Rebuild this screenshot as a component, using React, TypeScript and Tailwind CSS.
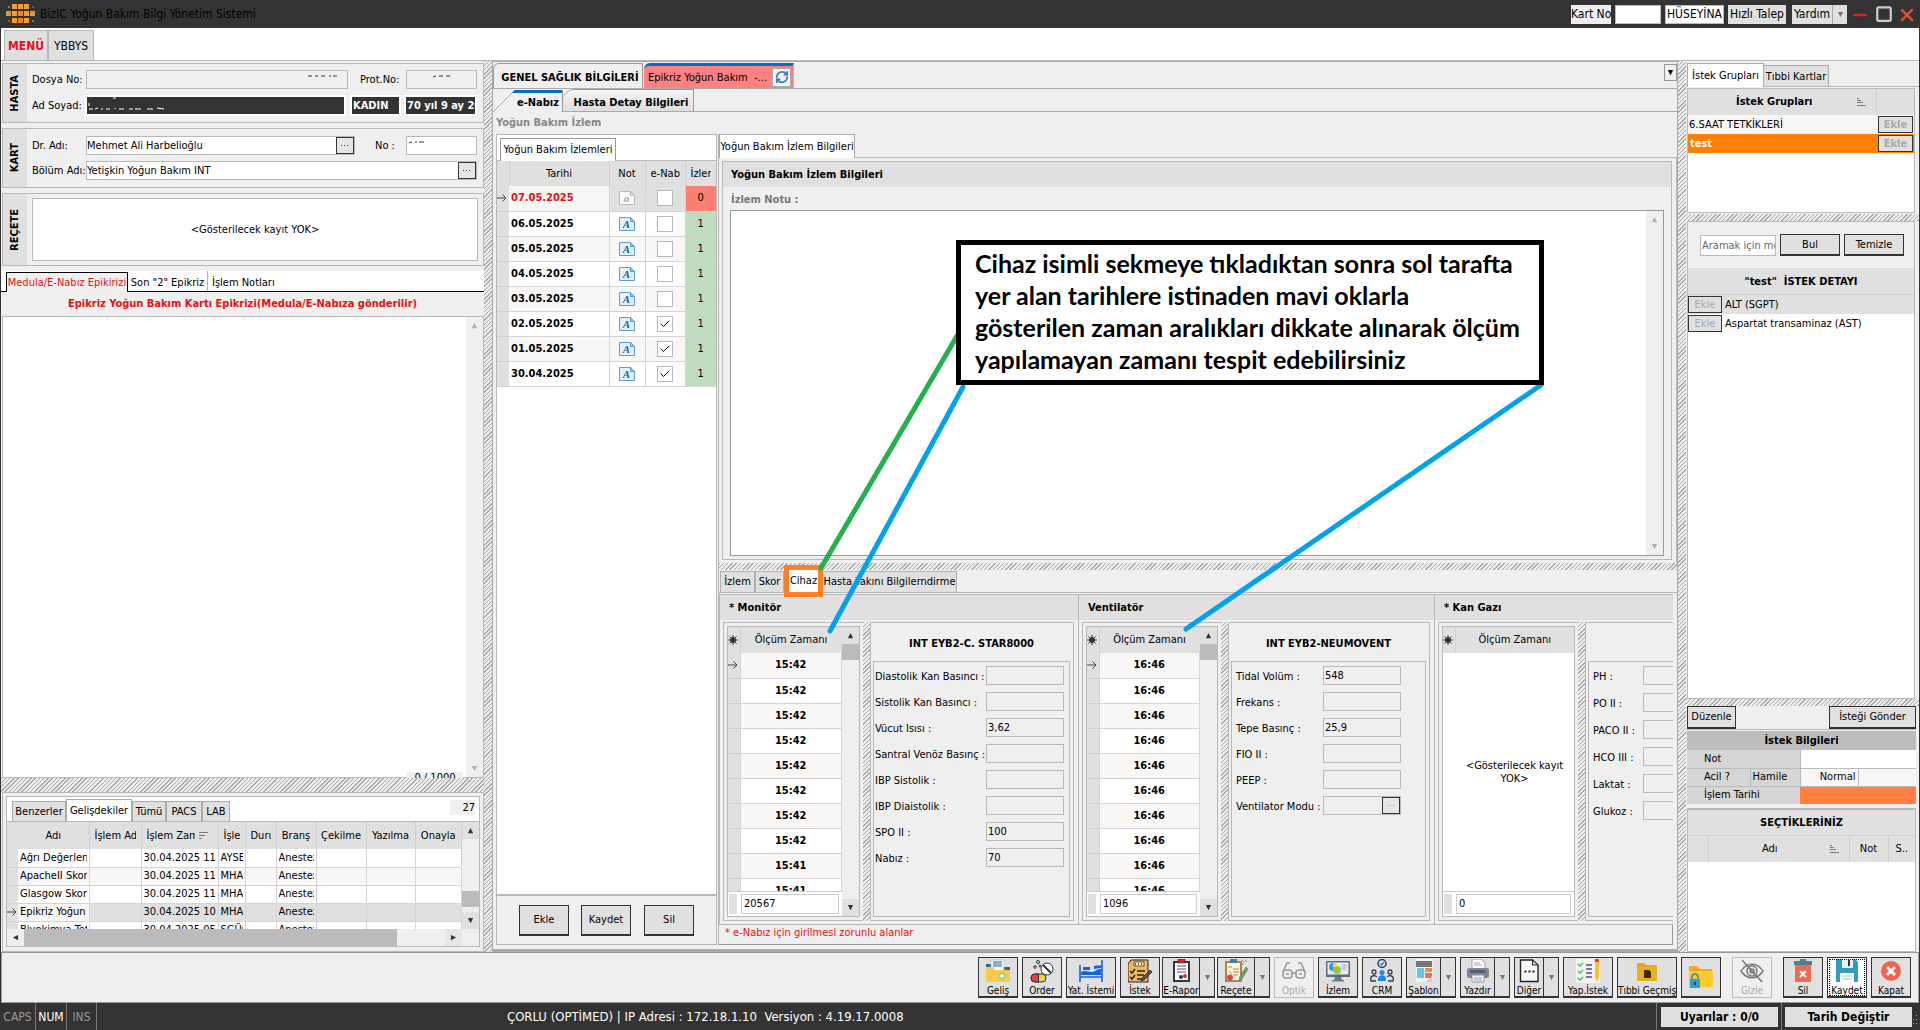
import type { ReactNode } from "react";
import clsx from "clsx";
import { Check, Minus, RefreshCw, Square, X } from "lucide-react";

const HATCH = "bg-[repeating-linear-gradient(135deg,#a9a9a9_0_1px,#ededed_1px_3px)]";

type Dir = "up" | "down" | "left" | "right";

function Arrow({ dir, className = "text-[#333]" }: { dir: Dir; className?: string }) {
  const d = {
    up: "M4 1 7 7H1z",
    down: "M4 7 1 1h6z",
    left: "M1 4 7 1v6z",
    right: "M7 4 1 1v6z",
  }[dir];
  return (
    <svg viewBox="0 0 8 8" className={clsx("size-[7px]", className)}>
      <path d={d} fill="currentColor" />
    </svg>
  );
}

function VScroll({ thumb, muted }: { thumb?: string; muted?: boolean }) {
  const color = muted ? "text-[#b0b0b0]" : "text-[#333]";
  const cap = clsx("flex h-[17px] shrink-0 items-center justify-center", !muted && "bg-[#e0e0e0]");
  return (
    <div className="flex w-[17px] shrink-0 flex-col bg-[#efefef]">
      <div className={cap}>
        <Arrow dir="up" className={color} />
      </div>
      <div className="min-h-0 flex-1 overflow-hidden">
        {thumb && <div className={clsx("bg-[#bbb]", thumb)} />}
      </div>
      <div className={cap}>
        <Arrow dir="down" className={color} />
      </div>
    </div>
  );
}

function RowPointer() {
  return (
    <svg viewBox="0 0 10 8" className="h-2 w-[10px]" fill="none" stroke="#444" strokeWidth="1">
      <path d="M0 4h9M5.500 .5 9 4 5.500 7.500" />
    </svg>
  );
}

function StarMark() {
  return (
    <svg viewBox="0 0 10 10" className="size-[10px]" stroke="#333" strokeWidth="1">
      <circle cx="5" cy="5" r="2.500" fill="#333" />
      <path d="M5 0v10M0 5h10M1.500 1.500l7 7M8.500 1.500l-7 7" />
    </svg>
  );
}

function SortMark({ desc }: { desc?: boolean }) {
  return (
    <svg viewBox="0 0 9 8" className="h-2 w-[9px] shrink-0" stroke="#777" strokeWidth="1">
      {desc ? <path d="M0 .5h9M0 3.500h6M0 6.500h3" /> : <path d="M0 .5h2M0 2.500h4M0 4.500h6M0 7.500h9" />}
    </svg>
  );
}

/* ---------- title bar ---------- */

function Logo() {
  const cells: [number, number, string][] = [
    [6, 0, "#f0a030"], [12, 0, "#f0a030"], [18, 0, "#f0a030"],
    [0, 7, "#d99a35"], [6, 7, "#f0a030"], [12, 7, "#ef7f2a"], [18, 7, "#f0a030"], [24, 7, "#d99a35"],
    [6, 14, "#f0a030"], [12, 14, "#ef7f2a"], [18, 14, "#f0a030"],
  ];
  return (
    <svg viewBox="0 0 30 20" className="h-5 w-[30px]">
      <rect x="2" y="2" width="2" height="2" fill="#8a7a60" />
      <rect x="26" y="16" width="2" height="2" fill="#8a7a60" />
      <rect x="26" y="2" width="2" height="2" fill="#8a5a30" />
      <rect x="2" y="16" width="2" height="2" fill="#8a5a30" />
      {cells.map(([x, y, c]) => (
        <rect key={`${x}-${y}`} x={x} y={y} width="5" height="5" fill={c} />
      ))}
    </svg>
  );
}

function TitleBar() {
  return (
    <header className="flex h-7 shrink-0 items-center bg-[#333] pr-[3px] pl-[6px] text-xs text-black">
      <Logo />
      <h1 className="ml-1 whitespace-nowrap">BizIC Yoğun Bakım Bilgi Yönetim Sistemi</h1>
      <div className="ml-auto flex h-[19px] items-stretch">
        <label htmlFor="kartno" className="w-10 overflow-hidden whitespace-nowrap bg-[#efefef] leading-[19px]">Kart No</label>
        <input id="kartno" className="ml-1 w-[46px] border border-[#bbb] bg-white" />
        <input aria-label="Kullanıcı" defaultValue="HÜSEYİNA" className="ml-1 w-[59px] border border-[#bbb] bg-white pl-px" />
        <button className="ml-1 w-[58px] overflow-hidden whitespace-nowrap bg-[#e0e0e0]">Hızlı Talep</button>
        <button className="ml-[6px] w-10 overflow-hidden whitespace-nowrap bg-[#e0e0e0]">Yardım</button>
        <button aria-label="Yardım menüsü" className="flex w-[15px] items-center justify-center border-l border-[#aaa] bg-[#e0e0e0]">
          <Arrow dir="down" className="text-[#777]" />
        </button>
        <button aria-label="Küçült" className="ml-[3px] text-[#e02020]"><Minus className="size-5" strokeWidth={3} /></button>
        <button aria-label="Büyüt" className="ml-[5px] text-[#ccc]"><Square className="size-[18px]" strokeWidth={3} /></button>
        <button aria-label="Kapat" className="ml-1 text-[#d9502f]"><X className="size-5" strokeWidth={3} /></button>
      </div>
    </header>
  );
}

function MenuBar() {
  const tab = "h-[30px] self-end border border-b-0 border-[#b8b8b8] bg-[#e0e0e0] pt-px text-xs";
  return (
    <nav className="flex h-[33px] shrink-0 border-b border-[#b8b8b8] bg-white pl-[3px]">
      <button className={clsx(tab, "w-11 font-bold text-[#e81010]")}>MENÜ</button>
      <button className={clsx(tab, "w-[46px]")}>YBBYS</button>
    </nav>
  );
}

/* ---------- left column ---------- */

function Panel({ title, className, children }: { title: string; className: string; children: ReactNode }) {
  return (
    <section className={clsx("ml-px flex shrink-0 border border-[#b8b8b8]", className)}>
      <h2 className="flex w-6 shrink-0 items-center justify-center bg-[#e0e0e0] font-bold">
        <span className="rotate-180 [writing-mode:vertical-rl]">{title}</span>
      </h2>
      <div className="flex min-w-0 flex-1 flex-col justify-center gap-[6px] pr-[6px] pl-[5px]">{children}</div>
    </section>
  );
}

function Lookup({ id, value, disabled, className }: { id: string; value?: string; disabled?: boolean; className?: string }) {
  return (
    <div className={clsx("flex h-[19px] border border-[#b8b8b8]", disabled ? "bg-[#eee]" : "bg-white", className)}>
      <input id={id} defaultValue={value} disabled={disabled} className="min-w-0 flex-1 bg-transparent" />
      <button aria-label="Seç" className="flex w-[18px] items-center justify-center border border-[#333] bg-[#e6e6e6]">
        <svg viewBox="0 0 8 2" className="h-[2px] w-2" fill={disabled ? "#aaa" : "#333"}>
          <rect width="1" height="1" x="0" />
          <rect width="1" height="1" x="3" />
          <rect width="1" height="1" x="6" />
        </svg>
      </button>
    </div>
  );
}

function PatientPanels() {
  const field = "h-[19px] border border-[#b8b8b8] px-px";
  const dark = "h-[21px] border-2 border-white bg-[#333] pl-px font-bold text-white";
  return (
    <>
      <Panel title="HASTA" className="h-[60px]">
        <div className="flex items-center">
          <label htmlFor="dosya" className="w-[54px] whitespace-nowrap">Dosya No:</label>
          <div className={clsx(field, "flex flex-1 justify-end")}>
            <input id="dosya" readOnly className="min-w-0 flex-1" />
            <svg viewBox="0 0 30 4" className="mt-1 mr-2 h-1 w-[30px]" stroke="#333">
              <path d="M0 1h4M7 1h3M13 1h4M21 1h2M25 1h4" />
            </svg>
          </div>
          <label htmlFor="prot" className="ml-3 w-[46px] whitespace-nowrap">Prot.No:</label>
          <div className={clsx(field, "flex w-[71px]")}>
            <input id="prot" readOnly className="min-w-0 flex-1" />
            <svg viewBox="0 0 18 4" className="mt-1 mr-6 h-1 w-[18px]" stroke="#333">
              <path d="M0 2l3-1M6 1h4M13 1h4" />
            </svg>
          </div>
        </div>
        <div className="flex items-center">
          <label htmlFor="adsoyad" className="w-[53px] whitespace-nowrap">Ad Soyad:</label>
          <div className={clsx(dark, "flex flex-1")}>
            <svg viewBox="0 0 80 14" className="h-[14px] w-20 shrink-0" stroke="#fff" fill="none">
              <path d="M1 6v3M1 12h4M7 12l3-1M13 12h2M18 12h4M25 1h3M27 11v1M31 12h5M41 12h4M47 12h6M59 12h6M69 11l7 1" />
            </svg>
            <input id="adsoyad" readOnly className="min-w-0 flex-1" />
          </div>
          <input aria-label="Cinsiyet" readOnly value="KADIN" className={clsx(dark, "ml-1 w-[51px]")} />
          <input aria-label="Yaş" readOnly value="70 yıl 9 ay 20 gün" className={clsx(dark, "ml-[3px] w-[73px]")} />
        </div>
      </Panel>

      <Panel title="KART" className="h-[60px]">
        <div className="flex items-center">
          <label htmlFor="dr" className="w-[54px] whitespace-nowrap">Dr. Adı:</label>
          <Lookup id="dr" value="Mehmet Ali Harbelioğlu" className="flex-1" />
          <label htmlFor="kno" className="ml-5 w-[31px] whitespace-nowrap">No :</label>
          <div className={clsx(field, "flex w-[71px] bg-white")}>
            <svg viewBox="0 0 16 4" className="mt-1 ml-px h-1 w-4" stroke="#333">
              <path d="M0 2l3-1M6 1h2M10 1h5" />
            </svg>
            <input id="kno" className="min-w-0 flex-1" />
          </div>
        </div>
        <div className="flex items-center">
          <label htmlFor="bolum" className="w-[54px] whitespace-nowrap">Bölüm Adı:</label>
          <Lookup id="bolum" value="Yetişkin Yoğun Bakım INT" className="flex-1" />
        </div>
      </Panel>

      <Panel title="REÇETE" className="h-[73px]">
        <div className="-mr-px flex h-[63px] items-center justify-center border border-[#b8b8b8] bg-white">
          &lt;Gösterilecek kayıt YOK&gt;
        </div>
      </Panel>
    </>
  );
}

function Epikriz() {
  return (
    <section className="flex min-h-0 flex-1 flex-col">
      <div className="flex h-[21px] shrink-0 items-end border-b border-black bg-white pl-[5px]">
        <button className="-mb-px h-5 w-[122px] border border-b-0 border-black bg-[#f0f0f0] pt-px whitespace-nowrap text-[#e81010]">Medula/E-Nabız Epikirizi</button>
        <button className="h-5 w-20 border-r border-[#b0b0b0] pt-[3px] whitespace-nowrap">Son "2" Epikriz</button>
        <button className="h-5 px-1 pt-[3px] whitespace-nowrap">İşlem Notları</button>
      </div>
      <h2 className="flex h-6 shrink-0 items-center justify-center font-bold text-[#e81010]">
        Epikriz Yoğun Bakım Kartı Epikrizi(Medula/E-Nabıza gönderilir)
      </h2>
      <div className="relative ml-px flex min-h-0 flex-1 border border-[#b8b8b8] bg-white">
        <textarea aria-label="Epikriz" className="min-w-0 flex-1 resize-none bg-white" />
        <VScroll muted />
        <div className="absolute right-5 -bottom-px h-[6px] w-14 overflow-hidden bg-[#efefef] text-center leading-3">0 / 1000</div>
      </div>
    </section>
  );
}

const VISITS = [
  ["Ağrı Değerlendirme", "30.04.2025 11:40", "AYSEL", "Anestezi"],
  ["ApacheII Skoru", "30.04.2025 11:30", "MHARB", "Anestezi"],
  ["Glasgow Skoru", "30.04.2025 11:20", "MHARB", "Anestezi"],
  ["Epikriz Yoğun Bakım", "30.04.2025 10:55", "MHARB", "Anestezi"],
  ["Biyokimya Tetkik", "30.04.2025 05:10", "SGÜÇL", "Anestezi"],
];

function Clip({ children }: { children: ReactNode }) {
  return <span className="block overflow-hidden whitespace-nowrap">{children}</span>;
}

function VisitList() {
  const tab = "h-5 border border-b-0 border-[#aaa] bg-[#e0e0e0]";
  const th = "border-r border-[#cfcfcf] pr-[5px] pl-[5px] font-normal";
  const td = "h-[18px] border-r border-b border-[#d4d4d4] px-[2px]";
  return (
    <section className="ml-px flex h-[160px] shrink-0 flex-col border border-[#b8b8b8] px-[3px] pt-[3px] pb-1">
      <div className="flex min-h-0 flex-1 flex-col border border-[#b8b8b8] bg-white">
        <div className="flex h-[25px] shrink-0 items-end border-b border-[#b8b8b8] pl-[5px]">
          <button className={clsx(tab, "w-[54px]")}>Benzerler</button>
          <button className="h-[22px] w-[66px] border border-b-0 border-[#aaa] bg-white">Gelişdekiler</button>
          <button className={clsx(tab, "w-[34px]")}>Tümü</button>
          <button className={clsx(tab, "w-9")}>PACS</button>
          <button className={clsx(tab, "w-7")}>LAB</button>
          <output className="mr-1 mb-[6px] ml-auto h-[15px] w-[25px] bg-[#efefef] text-right leading-[15px]">27</output>
        </div>
        <div className="flex min-h-0 flex-1">
          <div className="min-w-0 flex-1 overflow-hidden">
            <table className="w-full table-fixed border-collapse">
              <colgroup>
                <col className="w-[11px]" />
                <col className="w-[71px]" />
                <col className="w-[52px]" />
                <col className="w-[77px]" />
                <col className="w-[27px]" />
                <col className="w-[31px]" />
                <col className="w-10" />
                <col className="w-[50px]" />
                <col className="w-[49px]" />
                <col />
              </colgroup>
              <thead>
                <tr className="h-[27px] bg-[#e0e0e0]">
                  <th />
                  <th className={th}>Adı</th>
                  <th className={clsx(th, "text-left")}><Clip>İşlem Adı</Clip></th>
                  <th className={th}>
                    <span className="flex items-center gap-1">
                      <span className="w-12 overflow-hidden whitespace-nowrap">İşlem Zamanı</span>
                      <SortMark desc />
                    </span>
                  </th>
                  <th className={clsx(th, "text-left")}><Clip>İşlem</Clip></th>
                  <th className={clsx(th, "text-left")}><Clip>Durum</Clip></th>
                  <th className="border-r border-[#cfcfcf] font-normal">Branş</th>
                  <th className="border-r border-[#cfcfcf] font-normal">Çekilme</th>
                  <th className="border-r border-[#cfcfcf] font-normal">Yazılma</th>
                  <th className="border-r border-[#cfcfcf] font-normal">Onayla</th>
                </tr>
              </thead>
              <tbody>
                {VISITS.map(([adi, zaman, kisi, brans], i) => (
                  <tr key={adi} className={i === 3 ? "bg-[#e0e0e0]" : i % 2 ? "bg-[#f8f7f6]" : "bg-white"}>
                    <td className="border-b border-[#d4d4d4] bg-[#e0e0e0]">{i === 3 && <RowPointer />}</td>
                    <td className={clsx(td, i === 3 && "bg-[#f8f7f6]")}><Clip>{adi}</Clip></td>
                    <td className={td} />
                    <td className={td}><Clip>{zaman}</Clip></td>
                    <td className={td}><Clip>{kisi}</Clip></td>
                    <td className={td} />
                    <td className={td}><Clip>{brans}</Clip></td>
                    <td className={td} />
                    <td className={td} />
                    <td className={td} />
                  </tr>
                ))}
              </tbody>
            </table>
          </div>
          <VScroll thumb="mt-[52px] h-4" />
        </div>
        <div className="flex h-[17px] shrink-0 items-stretch bg-[#efefef]">
          <div className="flex w-[17px] items-center justify-center"><Arrow dir="left" /></div>
          <div className="w-[373px] bg-[#bbb]" />
          <div className="ml-auto flex w-[17px] items-center justify-center bg-[#e6e6e6]"><Arrow dir="right" /></div>
          <div className="w-[17px]" />
        </div>
      </div>
    </section>
  );
}

/* ---------- center: follow-up list and note ---------- */

const DAYS = [
  { date: "07.05.2025", sent: false, count: 0 },
  { date: "06.05.2025", sent: false, count: 1 },
  { date: "05.05.2025", sent: false, count: 1 },
  { date: "04.05.2025", sent: false, count: 1 },
  { date: "03.05.2025", sent: false, count: 1 },
  { date: "02.05.2025", sent: true, count: 1 },
  { date: "01.05.2025", sent: true, count: 1 },
  { date: "30.04.2025", sent: true, count: 1 },
];

function NoteIcon({ empty }: { empty?: boolean }) {
  return (
    <svg viewBox="0 0 16 14" className="inline-block h-[14px] w-4 align-middle">
      <path d="M.5.5h11l4 4v9H.5z" fill={empty ? "#f8f8f8" : "#e3f1fd"} stroke={empty ? "#bbb" : "#5a9bd8"} />
      <path d="M11.500.5v4h4z" fill={empty ? "#ddd" : "#8cc4f2"} stroke={empty ? "#bbb" : "#5a9bd8"} />
      <text x="7.500" y="11" textAnchor="middle" fontSize="11" fontWeight="bold" fontStyle="italic" fontFamily="Liberation Serif, serif" fill={empty ? "#aaa" : "#2560a8"}>
        {empty ? "a" : "A"}
      </text>
    </svg>
  );
}

function DayList() {
  const cell = "border-r border-b border-[#d4d4d4]";
  const btn = "h-[31px] w-[50px] border border-b-2 border-[#333] bg-[#e0e0e0]";
  return (
    <section className="flex w-[221px] shrink-0 flex-col border border-[#b8b8b8] bg-white">
      <div className="flex h-[26px] shrink-0 items-end border-b border-[#b8b8b8] pl-[3px]">
        <button className="-mb-px h-[23px] w-[116px] border border-b-0 border-[#999] bg-white whitespace-nowrap">Yoğun Bakım İzlemleri</button>
      </div>
      <table className="w-full table-fixed border-collapse">
        <colgroup>
          <col className="w-3" />
          <col className="w-[100px]" />
          <col className="w-9" />
          <col className="w-10" />
          <col />
        </colgroup>
        <thead>
          <tr className="h-[25px] bg-[#e0e0e0] whitespace-nowrap">
            <th />
            <th className="border-x border-[#cfcfcf] font-normal">Tarihi</th>
            <th className="border-r border-[#cfcfcf] font-normal">Not</th>
            <th className="border-r border-[#cfcfcf] px-[5px] text-left font-normal"><Clip>e-Nabız</Clip></th>
            <th className="px-[5px] text-left font-normal"><Clip>İzlem</Clip></th>
          </tr>
        </thead>
        <tbody>
          {DAYS.map((d, i) => (
            <tr key={d.date} className={clsx("h-[25px]", i === 0 ? "bg-[#e0e0e0]" : i % 2 ? "bg-white" : "bg-[#f8f7f6]")}>
              <td className="border-b border-[#cfcfcf] bg-[#e0e0e0]">{i === 0 && <RowPointer />}</td>
              <td className={clsx(cell, "pl-[2px] font-bold", i === 0 && "bg-[#f8f7f6] text-[#e01010]")}>{d.date}</td>
              <td className={clsx(cell, "text-center")}><NoteIcon empty={i === 0} /></td>
              <td className={cell}>
                <span className="relative mx-auto block size-4">
                  <input type="checkbox" aria-label={`e-Nabız ${d.date}`} defaultChecked={d.sent} className="peer block size-4 appearance-none border border-[#b8b8b8] bg-white" />
                  <Check className="pointer-events-none absolute inset-0 m-auto hidden size-3 peer-checked:block" strokeWidth={2} />
                </span>
              </td>
              <td className={clsx("border-b border-[#cfd8cf] text-center", d.count ? "bg-[#c0dcc0]" : "bg-[#fa8072]")}>{d.count}</td>
            </tr>
          ))}
        </tbody>
      </table>
      <div className="flex-1" />
      <div className="flex h-[50px] shrink-0 items-center border-t-2 border-[#b8b8b8] bg-[#efefef] pl-[22px]">
        <button className={btn}>Ekle</button>
        <button className={clsx(btn, "ml-3")}>Kaydet</button>
        <button className={clsx(btn, "ml-[13px]")}>Sil</button>
      </div>
    </section>
  );
}

function NotePanel() {
  return (
    <section className="flex min-h-0 flex-1 flex-col">
      <div className="flex h-6 shrink-0 border-b border-[#b8b8b8]">
        <button className="-mb-px h-6 w-[136px] border border-b-0 border-[#aaa] bg-white whitespace-nowrap">Yoğun Bakım İzlem Bilgileri</button>
      </div>
      <div className="flex min-h-0 flex-1 flex-col border-r border-[#b8b8b8] py-[3px] pr-1 pl-[3px]">
        <div className="flex min-h-0 flex-1 flex-col border border-[#b8b8b8]">
          <h2 className="h-[25px] shrink-0 bg-[#e0e0e0] pl-2 leading-[25px] font-bold">Yoğun Bakım İzlem Bilgileri</h2>
          <label htmlFor="note" className="h-[23px] shrink-0 pl-2 leading-[25px] font-bold text-[#777]">İzlem Notu :</label>
          <div className="mr-[7px] mb-[3px] ml-[7px] flex min-h-0 flex-1 border border-[#999] bg-white">
            <textarea id="note" className="min-w-0 flex-1 resize-none bg-white" />
            <VScroll muted />
          </div>
        </div>
      </div>
    </section>
  );
}

/* ---------- center: devices ---------- */

type Field = { label: string; value?: string; lookup?: boolean };

type DeviceProps = {
  title: string;
  name?: string;
  times: string[];
  count: string;
  fields: Field[];
  className: string;
  gridClass: string;
  labelClass: string;
  rowClass: string;
};

function Device({ title, name, times, count, fields, className, gridClass, labelClass, rowClass }: DeviceProps) {
  const hasRows = times.length > 0;
  return (
    <section className={clsx("flex shrink-0 flex-col overflow-hidden border-l border-[#b8b8b8]", className)}>
      <h2 className="h-[25px] shrink-0 bg-[#e0e0e0] pl-[9px] leading-[25px] font-bold">{title}</h2>
      <div className="flex min-h-0 flex-1 pt-[2px] pr-1 pb-[3px] pl-[3px]">
        <div className={clsx("flex shrink-0 border border-r-0 border-[#b8b8b8] p-[3px]", gridClass)}>
          <div className="flex min-w-0 flex-1 border border-[#b8b8b8]">
            <div className="flex min-w-0 flex-1 flex-col bg-white">
              <div className="min-h-0 flex-1 overflow-hidden">
                <table className="w-full table-fixed border-collapse">
                  <colgroup>
                    <col className="w-[12px]" />
                    <col />
                  </colgroup>
                  <thead>
                    <tr className="h-[26px] bg-[#e0e0e0]">
                      <th><StarMark /></th>
                      <th className="border-l border-[#cfcfcf] font-normal whitespace-nowrap">Ölçüm Zamanı</th>
                    </tr>
                  </thead>
                  <tbody>
                    {times.map((t, i) => (
                      <tr key={i} className={clsx("h-[25px]", i % 2 ? "bg-white" : "bg-[#f8f7f6]")}>
                        <td className="border-b border-[#cfcfcf] bg-[#e0e0e0]">{i === 0 && <RowPointer />}</td>
                        <td className="border border-t-0 border-[#d4d4d4] text-center font-bold">{t}</td>
                      </tr>
                    ))}
                  </tbody>
                </table>
                {!hasRows && <p className="mt-[106px] ml-3 text-center leading-[13px]">&lt;Gösterilecek kayıt YOK&gt;</p>}
              </div>
              <div className="flex h-[25px] shrink-0 border-t border-[#ccc] py-[2px] pr-[3px] pl-px">
                <div className="w-2 bg-[#e0e0e0]" />
                <output className="ml-1 flex-1 border border-[#ccc] pl-[2px] leading-[17px]">{count}</output>
              </div>
            </div>
            {hasRows && <VScroll thumb="h-4" />}
          </div>
        </div>
        <div className={clsx("w-[7px] shrink-0", HATCH)} />
        <div className="flex min-w-0 flex-1 flex-col border border-[#b8b8b8] pr-[3px] pb-[3px] pl-[2px]">
          <h3 className="h-[38px] shrink-0 text-center leading-[42px] font-bold whitespace-nowrap">{name}</h3>
          <div className="min-h-0 flex-1 overflow-hidden border border-[#b8b8b8] pt-1">
            {fields.map((f) => (
              <div key={f.label} className={clsx("flex items-start whitespace-nowrap", rowClass)}>
                <label htmlFor={`${title}-${f.label}`} className={clsx("shrink-0 leading-[21px]", labelClass)}>{f.label}</label>
                {f.lookup ? (
                  <Lookup id={`${title}-${f.label}`} disabled className="w-[78px]" />
                ) : (
                  <input id={`${title}-${f.label}`} readOnly value={f.value ?? ""} className="h-[19px] w-[78px] shrink-0 border border-[#b8b8b8] pl-px" />
                )}
              </div>
            ))}
          </div>
        </div>
      </div>
    </section>
  );
}

const MONITOR: Field[] = [
  { label: "Diastolik Kan Basıncı :" },
  { label: "Sistolik Kan Basıncı :" },
  { label: "Vücut Isısı :", value: "3,62" },
  { label: "Santral Venöz Basınç :" },
  { label: "IBP Sistolik :" },
  { label: "IBP Diaistolik :" },
  { label: "SPO II :", value: "100" },
  { label: "Nabız :", value: "70" },
];

const VENTILATOR: Field[] = [
  { label: "Tidal Volüm :", value: "548" },
  { label: "Frekans :" },
  { label: "Tepe Basınç :", value: "25,9" },
  { label: "FIO II :" },
  { label: "PEEP :" },
  { label: "Ventilator Modu :", lookup: true },
];

const BLOOD_GAS: Field[] = [
  { label: "PH :" },
  { label: "PO II :" },
  { label: "PACO II :" },
  { label: "HCO III :" },
  { label: "Laktat :" },
  { label: "Glukoz :" },
];

function DevicePanel() {
  const tab = "h-[21px] overflow-hidden whitespace-nowrap border border-b-0 border-[#b0b0b0] bg-[#e0e0e0]";
  return (
    <section className="flex h-[375px] shrink-0 flex-col">
      <div className="flex h-[23px] shrink-0 items-end border-b border-[#b8b8b8] pl-px">
        <button className={clsx(tab, "w-[35px]")}>İzlem</button>
        <button className={clsx(tab, "w-[29px]")}>Skor</button>
        <button className="relative -mb-[5px] h-8 w-[39px] border-[5px] border-[#ff7f27] bg-white">Cihaz</button>
        <button className={clsx(tab, "w-[134px] border-l-0")}>Hasta Yakını Bilgilerndirme</button>
      </div>
      <div className="mt-px mr-1 flex min-h-0 flex-1 overflow-hidden border-t border-b border-[#b8b8b8]">
        <Device
          title="* Monitör"
          name="INT EYB2-C. STAR8000"
          times={["15:42", "15:42", "15:42", "15:42", "15:42", "15:42", "15:42", "15:42", "15:41", "15:41"]}
          count="20567"
          fields={MONITOR}
          className="w-[359px]"
          gridClass="w-[140px]"
          labelClass="w-[112px] pl-px"
          rowClass="h-[26px]"
        />
        <Device
          title="Ventilatör"
          name="INT EYB2-NEUMOVENT"
          times={Array(10).fill("16:46")}
          count="1096"
          fields={VENTILATOR}
          className="w-[356px]"
          gridClass="w-[139px]"
          labelClass="w-[91px] pl-1"
          rowClass="h-[26px]"
        />
        <Device
          title="* Kan Gazı"
          times={[]}
          count="0"
          fields={BLOOD_GAS}
          className="w-[356px]"
          gridClass="w-[140px]"
          labelClass="w-[54px] pl-1"
          rowClass="h-[27px]"
        />
      </div>
      <p className="mr-1 h-5 shrink-0 border-r border-b border-[#999] pl-[6px] leading-[15px] text-[#e81010]">* e-Nabız için girilmesi zorunlu alanlar</p>
    </section>
  );
}

function Center() {
  return (
    <main className="flex min-w-0 flex-1 flex-col border border-b-[3px] border-[#aaa] pb-1">
      <div className="flex h-[27px] shrink-0 items-end border-b border-[#aaa]">
        <button className="h-[25px] w-[150px] rounded-tl-md border border-b-0 border-[#999] pt-1 pl-1 font-bold whitespace-nowrap">GENEL SAĞLIK BİLGİLERİ</button>
        <div className="ml-px flex h-[25px] w-[150px] items-center rounded-tl-md border-t-[3px] border-r border-[#0a6cbd] border-r-[#b8b8b8] bg-[#ff8080] pl-1">
          <button className="flex-1 pt-[2px] text-left whitespace-nowrap">Epikriz Yoğun Bakım&nbsp; -...</button>
          <button aria-label="Yenile" className="mr-[2px] flex size-[19px] items-center justify-center border border-[#aaa] bg-[#f3f3f3] text-[#3b78b8]">
            <RefreshCw className="size-[14px]" strokeWidth={3} />
          </button>
        </div>
        <button aria-label="Sekmeler" className="mb-[7px] ml-auto flex h-[17px] w-[13px] items-center justify-center border border-[#999]">
          <Arrow dir="down" className="text-black" />
        </button>
      </div>
      <div className="flex h-[23px] shrink-0 items-end border-b border-[#aaa] font-bold">
        <div className="relative -mb-px flex h-[22px] w-[70px] border-r border-[#999]">
          <svg viewBox="0 0 70 22" className="absolute inset-0 h-[22px] w-[70px]">
            <path d="M0 22 22 0h47v22z" fill="#efefef" />
            <path d="M0 22 22 0" stroke="#aaa" />
            <path d="M22 0h47v3H19z" fill="#0a6cbd" />
          </svg>
          <button className="relative ml-auto pt-1 pr-[3px]">e-Nabız</button>
        </div>
        <button className="h-[22px] w-[131px] rounded-tl-xl border border-l-0 border-b-0 border-[#999] bg-linear-to-b from-[#f6f6f6] to-[#dedede] pt-1 pl-[6px] whitespace-nowrap">Hasta Detay Bilgileri</button>
      </div>
      <h2 className="h-[22px] shrink-0 pl-[3px] leading-[22px] font-bold text-[#888]">Yoğun Bakım İzlem</h2>
      <div className="flex min-h-0 flex-1 gap-px pl-[3px]">
        <DayList />
        <div className="flex min-w-0 flex-1 flex-col border-l border-[#b8b8b8]">
          <NotePanel />
          <div className={clsx("h-[7px] shrink-0", HATCH)} />
          <DevicePanel />
        </div>
      </div>
    </main>
  );
}

/* ---------- right column ---------- */

function RequestGroups() {
  const add = "h-[17px] w-[35px] border border-[#333] bg-[#e0e0e0] leading-[15px] font-bold text-[#aaa]";
  return (
    <section className="shrink-0">
      <div className="flex h-[26px] items-end border-b border-[#b8b8b8] pl-px">
        <button className="-mb-px h-6 w-[77px] border border-b-0 border-[#aaa] bg-white pt-px whitespace-nowrap">İstek Grupları</button>
        <button className="h-[21px] w-[65px] border border-l-0 border-b-0 border-[#aaa] bg-[#e0e0e0] pt-[2px] whitespace-nowrap">Tıbbi Kartlar</button>
      </div>
      <div className="mt-px mr-1 ml-px h-[125px] border border-[#b8b8b8] bg-white">
        <table className="w-full table-fixed border-collapse">
          <colgroup>
            <col />
            <col className="w-[38px]" />
          </colgroup>
          <thead>
            <tr className="h-[26px] bg-[#e0e0e0]">
              <th className="border-r border-[#cfcfcf]">
                <span className="flex items-center justify-end gap-11 pr-[10px]">İstek Grupları<SortMark /></span>
              </th>
              <th />
            </tr>
          </thead>
          <tbody>
            <tr className="h-[19px] bg-[#f8f7f6]">
              <td className="pl-px">6.SAAT TETKİKLERİ</td>
              <td className="pl-[2px]"><button disabled className={clsx(add, "block")}>Ekle</button></td>
            </tr>
            <tr className="h-[19px] bg-[#ff8000]">
              <td className="pl-[2px] font-bold text-white">test</td>
              <td className="pl-[2px]"><button disabled className={clsx(add, "block")}>Ekle</button></td>
            </tr>
          </tbody>
        </table>
      </div>
    </section>
  );
}

function RequestDetail() {
  const btn = "h-[22px] w-[60px] border border-b-2 border-[#333] bg-[#e0e0e0]";
  return (
    <section className="mr-1 ml-px flex min-h-0 flex-1 flex-col border border-[#b8b8b8] bg-white">
      <div className="flex h-[46px] shrink-0 items-center justify-end gap-1 bg-[#efefef] pr-[10px]">
        <input aria-label="Arama" placeholder="Aramak için me" className="h-[21px] w-[76px] border border-[#b8b8b8] bg-white pl-px placeholder:text-[#666]" />
        <button className={btn}>Bul</button>
        <button className={btn}>Temizle</button>
      </div>
      <h2 className="h-[27px] shrink-0 border-b border-[#d0d0d0] bg-[#e0e0e0] text-center leading-[27px] font-bold">"test"&nbsp; İSTEK DETAYI</h2>
      {["ALT (SGPT)", "Aspartat transaminaz (AST)"].map((t, i) => (
        <div key={t} className={clsx("flex h-[19px] shrink-0 items-center gap-[3px]", i === 0 && "bg-[#e0e0e0]")}>
          <button disabled className="h-[17px] w-[34px] border border-[#333] bg-[#e0e0e0] leading-[15px] text-[#aaa]">Ekle</button>
          <span>{t}</span>
        </div>
      ))}
    </section>
  );
}

function RequestInfo() {
  const btn = "h-[23px] border border-b-2 border-[#333] bg-[#e0e0e0] whitespace-nowrap";
  const td = "border-b border-[#bbb] bg-[#d6d6d6]";
  return (
    <section className="mr-[3px] ml-px flex h-[246px] shrink-0 flex-col">
      <div className="flex h-6 shrink-0 justify-between border-b border-[#b8b8b8]">
        <button className={clsx(btn, "w-[49px]")}>Düzenle</button>
        <button className={clsx(btn, "w-[87px]")}>İsteği Gönder</button>
      </div>
      <table className="mt-px w-full table-fixed border-collapse">
        <colgroup>
          <col className="w-[63px]" />
          <col className="w-[50px]" />
          <col className="w-[58px]" />
          <col />
        </colgroup>
        <thead>
          <tr className="h-[19px] bg-[#bdbdbd]">
            <th colSpan={4} className="leading-4">İstek Bilgileri</th>
          </tr>
        </thead>
        <tbody>
          <tr className="h-[18px]">
            <td colSpan={2} className={clsx(td, "pl-[17px]")}>Not</td>
            <td colSpan={2} className="border-b border-l border-[#bbb] bg-white" />
          </tr>
          <tr className="h-[18px]">
            <td className={clsx(td, "border-r pl-[17px]")}>Acil ?</td>
            <td className={clsx(td, "pl-[2px]")}>Hamile</td>
            <td className="border border-t-0 border-[#bbb] bg-[#f8f7f6] pr-[2px] text-right">Normal</td>
            <td className="border-b border-[#bbb] bg-[#f8f7f6]" />
          </tr>
          <tr className="h-[18px]">
            <td colSpan={2} className="bg-[#d6d6d6] pl-[17px]">İşlem Tarihi</td>
            <td colSpan={2} className="bg-[#ff8040]" />
          </tr>
        </tbody>
      </table>
      <div className="mt-1 min-h-0 flex-1 border border-t-2 border-[#b8b8b8] bg-white">
        <h2 className="h-[26px] border-b border-[#d0d0d0] bg-[#e0e0e0] text-center leading-[26px] font-bold">SEÇTİKLERİNİZ</h2>
        <table className="w-full table-fixed border-collapse">
          <thead>
            <tr className="h-[26px] bg-[#e0e0e0]">
              <th className="w-5 border-r border-[#cfcfcf]" />
              <th className="border-r border-[#cfcfcf] font-normal">
                <span className="flex items-center justify-end gap-[52px] pr-[10px]">Adı<SortMark /></span>
              </th>
              <th className="w-[39px] border-r border-[#cfcfcf] font-normal">Not</th>
              <th className="w-[27px] font-normal">S..</th>
            </tr>
          </thead>
        </table>
      </div>
    </section>
  );
}

/* ---------- bottom toolbar ---------- */

function Icon({ children }: { children: ReactNode }) {
  return <svg viewBox="0 0 24 24" className="size-6" fill="none">{children}</svg>;
}

const ICONS: Record<string, ReactNode> = {
  gelis: (
    <Icon>
      <path d="M0 5h6l2 3h16v15H0z" fill="#2d6a8e" />
      <path d="M5 1h13v11H5z" fill="#f4f8fb" stroke="#9cc4dc" strokeWidth=".6" />
      <path d="M7 3h9M7 5h9M7 7h9" stroke="#2d6a8e" />
      <path d="M0 8h7l2 3h15v12H0z" fill="#fbc94b" />
      <circle cx="16" cy="17" r="3.500" fill="#8ed68a" />
      <path d="M16 15v4M14 17h4" stroke="#fff" strokeWidth="1.300" />
    </Icon>
  ),
  order: (
    <Icon>
      <circle cx="17" cy="10" r="6" fill="#fff" stroke="#333" />
      <path d="M13 6l8 8" stroke="#333" strokeWidth="2" />
      <circle cx="8" cy="3" r="1.500" stroke="#333" />
      <circle cx="5" cy="8" r="1.300" stroke="#333" />
      <circle cx="10" cy="7" r="1" stroke="#333" />
      <rect x="1" y="15" width="15" height="8" rx="4" fill="#f6d24a" stroke="#333" />
      <path d="M8.500 15H5a4 4 0 0 0 0 8h3.500z" fill="#e0404a" stroke="#333" />
    </Icon>
  ),
  bed: (
    <Icon>
      <path d="M1 6v17M23 1v22M1 18h22" stroke="#1463e0" strokeWidth="1.600" />
      <path d="M2 13c6-3 9 2 14-1 3-2 5-2 6-2v6H2z" fill="#1463e0" />
      <path d="M4 8h7v3H4zM15 7c3-1 5 0 7-1v3c-3 0-5 1-7 1z" fill="#1463e0" />
    </Icon>
  ),
  istek: (
    <Icon>
      <path d="M3 1h17v22H0V5z" fill="#f2b95c" stroke="#222" />
      <path d="M6 3h10v4H6z" fill="#fff3d8" stroke="#222" strokeWidth=".7" />
      <path d="M7 5h1M10 5h1M13 5h1" stroke="#222" strokeWidth="1.500" />
      <path d="M2 12l2 2 3-4M2 18l2 2 3-4M9 12h8M9 16h7M9 20h5" stroke="#222" strokeWidth="1.500" />
      <path d="M22 11l2 2-8 8-3 1 1-3z" fill="#556" stroke="#222" strokeWidth=".8" />
    </Icon>
  ),
  rapor: (
    <Icon>
      <rect x="4" y="2" width="17" height="21" fill="#334" />
      <path d="M6 4h13v17H6z" fill="#fff" />
      <path d="M9 0h7v4H9z" fill="#e02030" stroke="#222" strokeWidth=".6" />
      <path d="M8 7h9M8 10h9M8 13h9" stroke="#556" />
      <circle cx="12" cy="18" r="2" fill="#334" />
      <circle cx="16" cy="17" r="2" fill="#c33" />
    </Icon>
  ),
  recete: (
    <Icon>
      <rect x="1" y="2" width="17" height="21" fill="#b9814a" />
      <path d="M3 4h13v17H3z" fill="#fbf3df" />
      <path d="M6 0h7v4H6z" fill="#3f7ea0" />
      <path d="M4 8h4M9 10h6M9 13h6M9 16h5M5 12l3 3" stroke="#b08a50" />
      <circle cx="6" cy="18.500" r="3" fill="#e04848" />
      <path d="M22 8l2 2-6 10-3 2 .5-4z" fill="#6fa06c" stroke="#486" strokeWidth=".6" />
      <path d="M18 1l2 2M21 1l2 2M20 4l-2 2" stroke="#a88650" />
    </Icon>
  ),
  optik: (
    <Icon>
      <g stroke="#999" strokeWidth="1.500">
        <rect x="1" y="11" width="9" height="8" rx="3" />
        <rect x="14" y="11" width="9" height="8" rx="3" />
        <path d="M10 14h4M1 13 5 4h3M23 13 19 4h-3M4 15h3M17 15h3" />
      </g>
    </Icon>
  ),
  izlem: (
    <Icon>
      <rect x="0" y="2" width="24" height="16" fill="#5d6d80" />
      <path d="M1.500 3.500h21v12h-21z" fill="#e5edf4" />
      <circle cx="7" cy="8" r="4" fill="#3b9ad9" />
      <circle cx="11" cy="11" r="4" fill="#9bc53d" />
      <path d="M7 8V4a4 4 0 0 1 4 4z" fill="#fdd835" />
      <path d="M16 6h5M16 8h5M16 10h4" stroke="#9fb2c4" />
      <path d="M9 18h6l1 3H8zM6 21h12v1.500H6z" fill="#6c7b8c" />
    </Icon>
  ),
  crm: (
    <Icon>
      <circle cx="12" cy="4.500" r="4" stroke="#2a3c5a" strokeWidth="1.500" />
      <path d="M10 4.500 11.500 6 14 3" stroke="#1e88e5" strokeWidth="1.300" />
      <circle cx="12" cy="13.500" r="2.500" fill="#1e88e5" />
      <path d="M8 22v-2c0-5 8-5 8 0v2z" fill="#1e88e5" />
      <g stroke="#2a3c5a" strokeWidth="1.300">
        <circle cx="4" cy="13" r="2" />
        <circle cx="20" cy="13" r="2" />
        <path d="M.7 22v-2c0-4 5-4 6-2M23.300 22v-2c0-4-5-4-6-2M.5 22H6M18 22h5.500" />
      </g>
    </Icon>
  ),
  sablon: (
    <Icon>
      <path d="M4 0h17v20l-5 3H4z" fill="#f3f3f3" />
      <path d="M4 2h16v6H4z" fill="#777" />
      <path d="M5 9h7v10H5z" fill="#5ec8e8" />
      <path d="M13 9h7v4h-7z" fill="#f28a3c" />
      <path d="M13 14h7v5h-7z" fill="#f06a5a" />
      <path d="M20 17v6h-6z" fill="#ccc" />
    </Icon>
  ),
  yazdir: (
    <Icon>
      <path d="M6 0h9l4 4v7H6z" fill="#fff" stroke="#889" strokeWidth=".8" />
      <path d="M8 4h6M8 6h8" stroke="#9ab" />
      <rect x="1" y="9" width="22" height="10" rx="2" fill="#7d8597" />
      <path d="M4 11h16v3H4z" fill="#555d70" />
      <path d="M6 16h12v7H6z" fill="#f2f5fa" stroke="#889" strokeWidth=".8" />
      <path d="M8 19h8M8 21h8" stroke="#9ab" />
    </Icon>
  ),
  diger: (
    <Icon>
      <path d="M3.500 1h12L21 6v16.500H3.500z" fill="#f4f6f8" stroke="#222" strokeWidth="1.400" />
      <path d="M15.500 1v5H21z" fill="#ddd" stroke="#222" />
      <path d="M7.500 12.500h2M11.500 12.500h2M15.500 12.500h2" stroke="#222" strokeWidth="2" />
    </Icon>
  ),
  yap: (
    <Icon>
      <path d="M0 0h24v24H0z" fill="#f2f2f2" />
      <path d="M2 5l2 2 3-3M2 12l2 2 3-3M2 19l2 2 3-3" stroke="#62c462" strokeWidth="1.600" />
      <path d="M10 6h6M10 10h6M10 14h6M10 18h6" stroke="#5a4a78" strokeWidth="1.600" />
      <path d="M19 3h4v16l-2 4-2-4z" fill="#fbc02d" />
      <path d="M19 0h4v3h-4z" fill="#e53935" />
    </Icon>
  ),
  tibbi: (
    <Icon>
      <path d="M2 4h7l2 2h11v2H2z" fill="#f0a21e" />
      <path d="M2 8h20v14H2z" fill="#e3b21c" />
      <path d="M9 11h5l2 2v6H9z" fill="#3a2a08" />
    </Icon>
  ),
  kilit: (
    <Icon>
      <path d="M0 1h8l3 3h12v18H0z" fill="#f5a623" />
      <path d="M0 6h24v16H0z" fill="#fcc92e" />
      <path d="M3 15v-3a3 3 0 0 1 6 0v3" stroke="#3a8fb0" strokeWidth="1.600" />
      <rect x="1" y="14" width="10" height="9" fill="#2ea3c9" />
      <path d="M6 17v3" stroke="#124" strokeWidth="1.500" />
    </Icon>
  ),
  gizle: (
    <Icon>
      <g stroke="#777" strokeWidth="1.500">
        <path d="M1 12c6-9 16-9 22 0-6 9-16 9-22 0zM2 1l20 22" />
        <circle cx="12" cy="12" r="5" />
        <circle cx="12" cy="12" r="2" />
      </g>
    </Icon>
  ),
  sil: (
    <Icon>
      <path d="M3 2h18v4H3zM9 0h6v3H9z" fill="#4f7f90" />
      <path d="M4 6h16v17H4z" fill="#ef6a50" />
      <path d="M9 12l6 6M15 12l-6 6" stroke="#fff" strokeWidth="2" />
    </Icon>
  ),
  kaydet: (
    <Icon>
      <path d="M1 0h19l3 3v20H1z" fill="#2f9cc0" />
      <path d="M7 0h11v9H7z" fill="#e8f2f6" />
      <path d="M13 1h2v6h-2z" fill="#333" />
      <path d="M5 14h14v9H5z" fill="#fff" />
      <path d="M7 17h10M7 20h10" stroke="#9cc" />
    </Icon>
  ),
  kapat: (
    <Icon>
      <circle cx="12" cy="12" r="10" fill="#f4604f" />
      <path d="M8 8l8 8M16 8l-8 8" stroke="#fff" strokeWidth="3" />
    </Icon>
  ),
};

type Tool = { icon: string; label?: string; className: string; group?: string; split?: boolean; disabled?: boolean; focused?: boolean };

const TOOLS: Tool[] = [
  { icon: "gelis", label: "Geliş", className: "w-10" },
  { icon: "order", label: "Order", className: "w-10" },
  { icon: "bed", label: "Yat. İstemi", className: "w-[50px]" },
  { icon: "istek", label: "İstek", className: "w-10" },
  { icon: "rapor", label: "E-Rapor", className: "w-[38px]", group: "-ml-[2px]", split: true },
  { icon: "recete", label: "Reçete", className: "w-[38px]", group: "-ml-[2px]", split: true },
  { icon: "optik", label: "Optik", className: "w-10", disabled: true },
  { icon: "izlem", label: "İzlem", className: "w-10" },
  { icon: "crm", label: "CRM", className: "w-10" },
  { icon: "sablon", label: "Şablon", className: "w-[35px]", split: true },
  { icon: "yazdir", label: "Yazdır", className: "w-[35px]", split: true },
  { icon: "diger", label: "Diğer", className: "w-[30px]", split: true },
  { icon: "yap", label: "Yap.İstek", className: "w-[50px]" },
  { icon: "tibbi", label: "Tıbbi Geçmiş", className: "w-[60px]" },
  { icon: "kilit", className: "w-10" },
  { icon: "gizle", label: "Gizle", className: "w-10", group: "ml-[7px]", disabled: true },
  { icon: "sil", label: "Sil", className: "w-10", group: "ml-[7px]" },
  { icon: "kaydet", label: "Kaydet", className: "w-10", focused: true },
  { icon: "kapat", label: "Kapat", className: "w-10" },
];

function Toolbar() {
  return (
    <div role="toolbar" className="flex h-[51px] shrink-0 items-center justify-end gap-1 border border-[#999] bg-[#efefef] pr-[7px]">
      {TOOLS.map((t) => (
        <div key={t.icon} className={clsx("flex h-[41px]", t.group)}>
          <button
            disabled={t.disabled}
            aria-label={t.label ?? "Kilit"}
            className={clsx(
              "flex flex-col items-center border pt-px text-[10px] leading-[13px] whitespace-nowrap",
              t.disabled ? "border-[#bbb] text-[#aaa]" : "border-b-2 border-[#333]",
              t.focused ? "bg-white outline-1 -outline-offset-3 outline-dotted outline-black" : !t.disabled && "bg-[#e0e0e0]",
              t.className,
            )}
          >
            <span className={clsx("h-[25px] shrink-0", !t.label && "mt-[6px]")}>{ICONS[t.icon]}</span>
            {t.label && <span>{t.label}</span>}
          </button>
          {t.split && (
            <button aria-label={`${t.label} menüsü`} className="flex w-[15px] items-center justify-center border border-b-2 border-l-0 border-[#333] bg-[#e0e0e0]">
              <Arrow dir="down" className="text-[#777]" />
            </button>
          )}
        </div>
      ))}
    </div>
  );
}

function StatusBar() {
  const key = "flex h-full items-center justify-center border-r border-[#777]";
  const btn = "h-5 bg-[#e0e0e0] text-xs font-bold text-black";
  return (
    <footer className="flex h-[27px] shrink-0 items-center bg-[#333] text-xs text-white">
      <span className={clsx(key, "w-9 text-[#999]")}>CAPS</span>
      <span className={clsx(key, "w-[31px]")}>NUM</span>
      <span className={clsx(key, "w-[30px] text-[#999]")}>INS</span>
      <span className="ml-[410px] text-[13px] whitespace-nowrap">ÇORLU (OPTİMED) | IP Adresi : 172.18.1.10&nbsp; Versiyon : 4.19.17.0008</span>
      <div className="ml-auto flex h-full items-center border-l border-[#777] pl-1">
        <button className={clsx(btn, "w-[117px]")}>Uyarılar : 0/0</button>
        <span className="mx-[3px] h-full w-px bg-[#777]" />
        <button className={clsx(btn, "w-[127px]")}>Tarih Değiştir</button>
        <svg viewBox="0 0 8 12" className="mt-2 h-3 w-2" fill="#aaa">
          <path d="M4 0h1v1H4zM4 4h1v1H4zM4 8h1v1H4zM1 4h1v1H1zM1 8h1v1H1z" />
        </svg>
      </div>
    </footer>
  );
}

/* help callout drawn over the window */
function Callout() {
  return (
    <div className="pointer-events-none absolute inset-0 overflow-hidden">
      <svg viewBox="0 0 1920 1030" className="absolute top-0 left-0 h-[1030px] w-[1920px]" fill="none" strokeWidth="5" strokeLinecap="round">
        <path d="M957 336 821 568" stroke="#22b14c" />
        <path d="M963 387 830 631" stroke="#00a2e8" />
        <path d="M1541 385 1186 629" stroke="#00a2e8" />
      </svg>
      <p className="absolute top-60 left-[956px] h-[145px] w-[588px] border-[5px] border-black bg-white pt-[2px] pl-[14px] font-[Lato] text-[25px] leading-8 font-bold whitespace-nowrap">
        Cihaz isimli sekmeye tıkladıktan sonra sol tarafta<br />
        yer alan tarihlere istinaden mavi oklarla<br />
        gösterilen zaman aralıkları dikkate alınarak ölçüm<br />
        yapılamayan zamanı tespit edebilirsiniz
      </p>
    </div>
  );
}

export default function App() {
  return (
    <div className="relative flex h-screen flex-col overflow-hidden bg-[#efefef] font-['DejaVu_Sans_Condensed','DejaVu_Sans',sans-serif] text-[11px] leading-[14px] text-black">
      <TitleBar />
      <div className="flex min-h-0 flex-1 flex-col border-x border-[#333]">
        <MenuBar />
        <div className="flex min-h-0 flex-1">
          <aside className="flex w-[483px] shrink-0 flex-col gap-[5px] pt-[2px]">
            <PatientPanels />
            <div className="flex min-h-0 flex-1 flex-col">
              <Epikriz />
              <div className={clsx("h-[14px] shrink-0", HATCH)} />
              <VisitList />
            </div>
          </aside>
          <div className={clsx("w-2 shrink-0", HATCH)} />
          <Center />
          <div className={clsx("w-2 shrink-0", HATCH)} />
          <aside className="flex w-[233px] shrink-0 flex-col">
            <RequestGroups />
            <div className={clsx("mt-px h-[7px] shrink-0", HATCH)} />
            <RequestDetail />
            <div className={clsx("h-[7px] shrink-0", HATCH)} />
            <RequestInfo />
          </aside>
        </div>
        <Toolbar />
      </div>
      <StatusBar />
      <Callout />
    </div>
  );
}
